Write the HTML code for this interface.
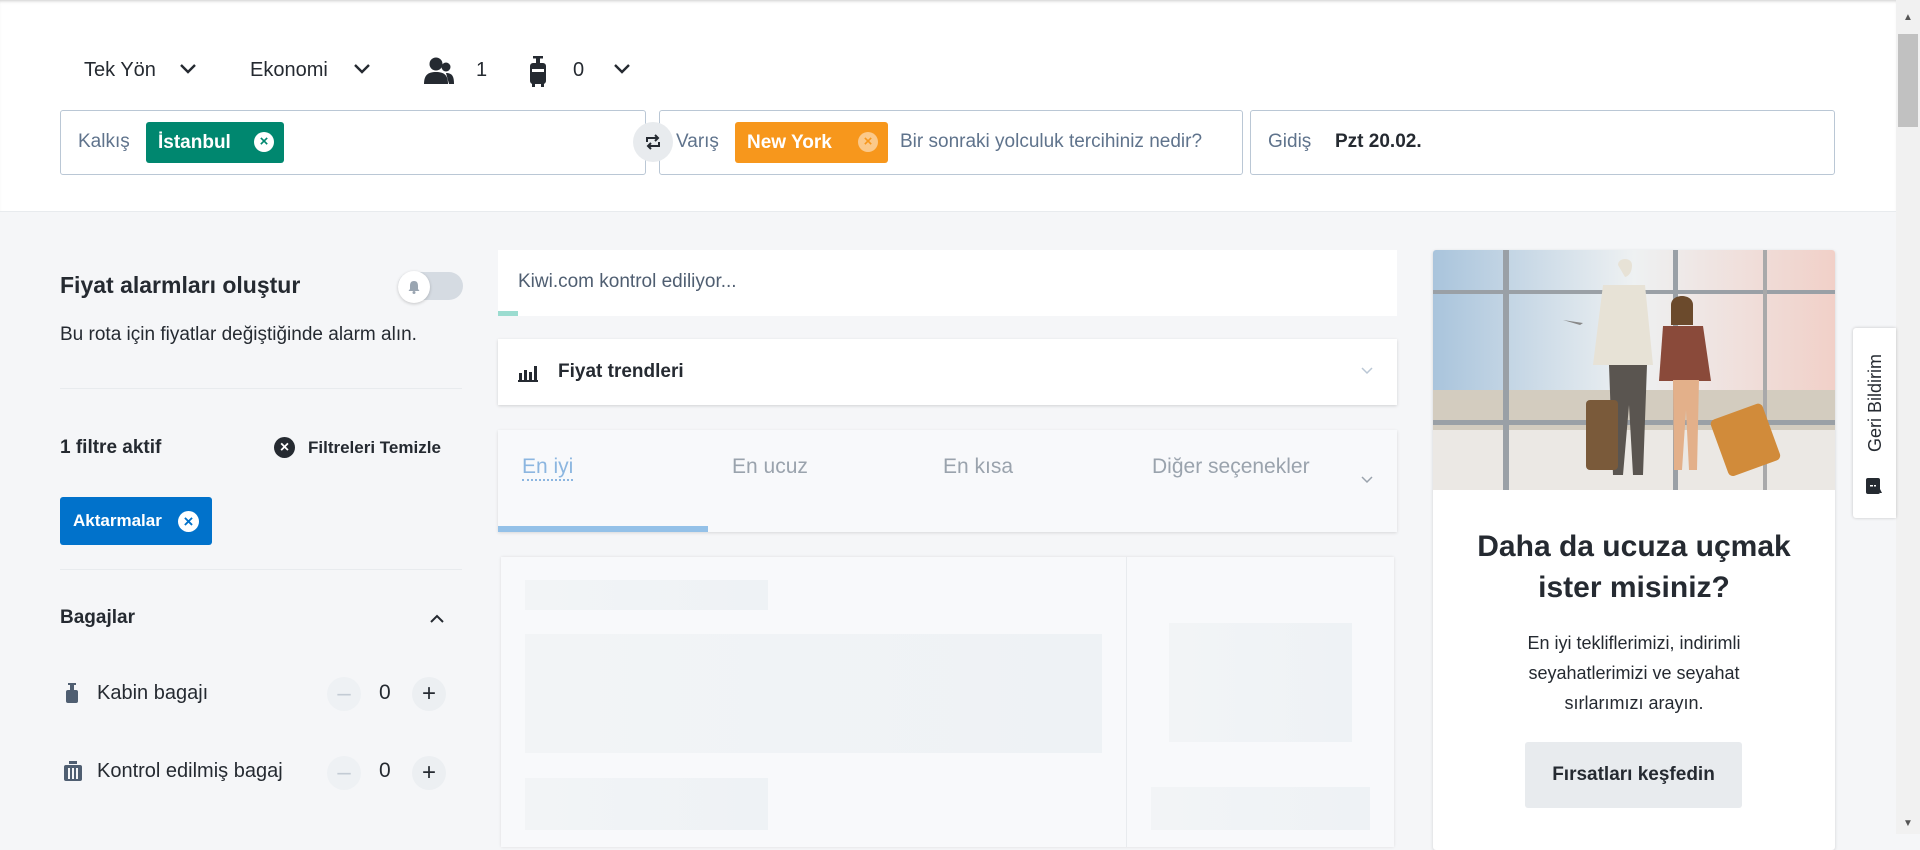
<!DOCTYPE html>
<html><head><meta charset="utf-8"><style>
*{box-sizing:border-box;margin:0;padding:0}
body{width:1920px;height:834px;overflow:hidden;background:#f5f6f8;font-family:"Liberation Sans",sans-serif;color:#252a31;position:relative}
.a{position:absolute}
.hdr{left:0;top:0;width:1896px;height:212px;background:#fff;border-bottom:1px solid #e8ebee;box-shadow:inset 0 3px 3px -2px #ccc}
.t{font-size:20px;line-height:24px}
.box{border:1px solid #bac7d5;border-radius:3px;background:#fff;height:65px;top:110px}
.lbl{font-size:19px;color:#5f738c}
.chip{height:41px;top:122px;border-radius:3px;color:#fff;font-weight:bold;font-size:19px;line-height:41px;padding-left:12px}
.cx{position:absolute;width:20px;height:20px;border-radius:50%;top:10px;font-size:15px;line-height:20px;text-align:center;font-weight:bold}
.card{background:#fff;box-shadow:0 1px 3px rgba(0,0,0,.15)}
.sk{background:linear-gradient(90deg,#f2f4f6,#eef2f5);}
.circ{width:34px;height:34px;border-radius:50%;background:#eceff2;text-align:center;line-height:34px;font-size:24px;color:#252a31}
.hr{height:1px;background:#e8ebee;left:60px;width:402px}
</style></head><body>
<div class="a hdr"></div>
<div class="a t" style="left:84px;top:58px">Tek Yön</div>
<svg class="a" style="left:178px;top:62px" width="20" height="14"><path d="M3 3l7 7 7-7" stroke="#252a31" stroke-width="2.4" fill="none"/></svg>
<div class="a t" style="left:250px;top:58px">Ekonomi</div>
<svg class="a" style="left:352px;top:62px" width="20" height="14"><path d="M3 3l7 7 7-7" stroke="#252a31" stroke-width="2.4" fill="none"/></svg>
<svg class="a" style="left:424px;top:56px" width="32" height="30"><circle cx="12" cy="8" r="6.5" fill="#252a31"/><path d="M0 28c0-9 4-12 12-12s12 3 12 12z" fill="#252a31"/><circle cx="22" cy="11" r="4.5" fill="#252a31"/><path d="M22 17c6 0 8 3 8 11h-5z" fill="#252a31"/></svg>
<div class="a t" style="left:476px;top:58px">1</div>
<svg class="a" style="left:528px;top:54px" width="20" height="34"><rect x="5" y="2" width="10" height="2.5" fill="#252a31"/><rect x="8" y="3" width="4" height="7" fill="#252a31"/><rect x="2" y="9" width="16" height="21" rx="3" fill="#252a31"/><rect x="4" y="15" width="12" height="3" fill="#fff"/><rect x="4" y="29" width="3" height="4" fill="#252a31"/><rect x="13" y="29" width="3" height="4" fill="#252a31"/></svg>
<div class="a t" style="left:573px;top:58px">0</div>
<svg class="a" style="left:612px;top:62px" width="20" height="14"><path d="M3 3l7 7 7-7" stroke="#252a31" stroke-width="2.4" fill="none"/></svg>

<div class="a box" style="left:60px;width:586px"></div>
<div class="a lbl" style="left:78px;top:131px">Kalkış</div>
<div class="a chip" style="left:146px;width:138px;background:#00876f">İstanbul<span class="cx" style="right:10px;background:#fff;color:#00876f">×</span></div>
<div class="a box" style="left:659px;width:584px"></div>
<div class="a lbl" style="left:676px;top:131px">Varış</div>
<div class="a chip" style="left:735px;width:153px;background:#f7971c">New York<span class="cx" style="right:10px;background:#fbc98a;color:#f7971c">×</span></div>
<div class="a lbl" style="left:900px;top:131px;width:340px;white-space:nowrap;overflow:hidden">Bir sonraki yolculuk tercihiniz nedir?</div>
<div class="a" style="left:633px;top:122px;width:40px;height:40px;border-radius:50%;background:#e8ebee"></div>
<svg class="a" style="left:643px;top:132px" width="20" height="20"><path d="M4 10V6h11M12 3l3 3-3 3M16 10v4H5M8 17l-3-3 3-3" stroke="#252a31" stroke-width="2" fill="none"/></svg>
<div class="a box" style="left:1250px;width:585px"></div>
<div class="a lbl" style="left:1268px;top:131px">Gidiş</div>
<div class="a" style="left:1335px;top:131px;font-size:19px;font-weight:bold">Pzt 20.02.</div>

<div class="a" style="left:1896px;top:0;width:24px;height:834px;background:#f1f1f1"></div>
<div class="a" style="left:1898px;top:34px;width:20px;height:93px;background:#c1c1c1"></div>
<div class="a" style="left:1903px;top:12px;font-size:10px;color:#555">▲</div>
<div class="a" style="left:1903px;top:818px;font-size:10px;color:#555">▼</div>

<!-- left -->
<div class="a" style="left:60px;top:272px;font-size:23px;font-weight:bold">Fiyat alarmları oluştur</div>
<div class="a" style="left:398px;top:272px;width:65px;height:28px;border-radius:14px;background:#d5dbe2"></div>
<div class="a" style="left:398px;top:271px;width:32px;height:32px;border-radius:50%;background:#fff;box-shadow:0 1px 3px rgba(0,0,0,.2)"></div>
<svg class="a" style="left:408px;top:280px" width="12" height="14"><path d="M6 1c3 0 4 2 4 5v3l1.5 2h-11L2 9V6c0-3 1-5 4-5z" fill="#9aa5b1"/><circle cx="6" cy="12.5" r="1.5" fill="#9aa5b1"/></svg>
<div class="a" style="left:60px;top:324px;font-size:19px">Bu rota için fiyatlar değiştiğinde alarm alın.</div>
<div class="a hr" style="top:388px"></div>
<div class="a" style="left:60px;top:437px;font-size:19px;font-weight:bold">1 filtre aktif</div>
<div class="a" style="left:274px;top:437px;width:21px;height:21px;border-radius:50%;background:#252a31;color:#fff;text-align:center;line-height:21px;font-size:16px;font-weight:bold">×</div>
<div class="a" style="left:308px;top:438px;font-size:17px;font-weight:bold;color:#252a31">Filtreleri Temizle</div>
<div class="a" style="left:60px;top:497px;width:152px;height:48px;border-radius:3px;background:#0172cb;color:#fff;font-weight:bold;font-size:17px;line-height:48px;padding-left:13px">Aktarmalar<span class="a" style="left:118px;top:14px;width:21px;height:21px;border-radius:50%;background:#fff;color:#0172cb;text-align:center;line-height:21px;font-size:17px">×</span></div>
<div class="a hr" style="top:569px"></div>
<div class="a" style="left:60px;top:607px;font-size:19px;font-weight:bold">Bagajlar</div>
<svg class="a" style="left:429px;top:613px" width="16" height="12"><path d="M2 9l6-6 6 6" stroke="#252a31" stroke-width="2" fill="none"/></svg>
<svg class="a" style="left:64px;top:683px" width="16" height="22"><rect x="4" y="0" width="8" height="2" fill="#4f5e71"/><rect x="6" y="1" width="4" height="6" fill="#4f5e71"/><rect x="2" y="7" width="12" height="13" rx="2" fill="#4f5e71"/></svg>
<div class="a" style="left:97px;top:682px;font-size:20px">Kabin bagajı</div>
<div class="a circ" style="left:327px;top:677px;color:#c3cbd4;background:#eef1f4">–</div>
<div class="a" style="left:379px;top:681px;font-size:21px">0</div>
<div class="a circ" style="left:412px;top:677px">+</div>
<svg class="a" style="left:63px;top:761px" width="20" height="22"><rect x="6" y="0" width="8" height="3" fill="#4f5e71"/><rect x="1" y="4" width="18" height="16" rx="2" fill="#4f5e71"/><rect x="5" y="7" width="2" height="11" fill="#f5f6f8"/><rect x="9" y="7" width="2" height="11" fill="#f5f6f8"/><rect x="13" y="7" width="2" height="11" fill="#f5f6f8"/></svg>
<div class="a" style="left:97px;top:760px;font-size:20px">Kontrol edilmiş bagaj</div>
<div class="a circ" style="left:327px;top:756px;color:#c3cbd4;background:#eef1f4">–</div>
<div class="a" style="left:379px;top:759px;font-size:21px">0</div>
<div class="a circ" style="left:412px;top:756px">+</div>

<!-- middle -->
<div class="a" style="left:498px;top:250px;width:899px;height:66px;background:#fff"></div>
<div class="a" style="left:518px;top:271px;font-size:19px;color:#4f5e71">Kiwi.com kontrol ediliyor...</div>
<div class="a" style="left:498px;top:311px;width:20px;height:5px;background:#9bdcd0"></div>
<div class="a card" style="left:498px;top:339px;width:899px;height:66px"></div>
<svg class="a" style="left:518px;top:364px" width="20" height="18"><rect x="1" y="9" width="3" height="7" fill="#252a31"/><rect x="6" y="6" width="3" height="10" fill="#252a31"/><rect x="11" y="8" width="3" height="8" fill="#252a31"/><rect x="16" y="2" width="3" height="14" fill="#252a31"/><rect x="0" y="16" width="20" height="2" fill="#252a31"/></svg>
<div class="a" style="left:558px;top:361px;font-size:19px;font-weight:bold">Fiyat trendleri</div>
<svg class="a" style="left:1360px;top:366px" width="14" height="10"><path d="M2 2l5 5 5-5" stroke="#bac7d5" stroke-width="1.5" fill="none"/></svg>
<div class="a" style="left:498px;top:430px;width:899px;height:102px;background:#f8f9fb;box-shadow:0 1px 3px rgba(0,0,0,.12)"></div>
<div class="a" style="left:522px;top:454px;font-size:21px;color:#8cb6e0;border-bottom:2px dotted #8cb6e0;line-height:25px">En iyi</div>
<div class="a" style="left:732px;top:454px;font-size:21px;color:#9aa3ad;line-height:25px">En ucuz</div>
<div class="a" style="left:943px;top:454px;font-size:21px;color:#9aa3ad;line-height:25px">En kısa</div>
<div class="a" style="left:1152px;top:454px;font-size:21px;color:#9aa3ad;line-height:25px">Diğer seçenekler</div>
<svg class="a" style="left:1360px;top:475px" width="14" height="10"><path d="M2 2l5 5 5-5" stroke="#9aa3ad" stroke-width="1.5" fill="none"/></svg>
<div class="a" style="left:498px;top:526px;width:210px;height:6px;background:#94c1e8"></div>
<div class="a" style="left:501px;top:557px;width:893px;height:290px;background:#f8f9fb;box-shadow:0 0 3px rgba(0,0,0,.1)"></div>
<div class="a" style="left:1126px;top:557px;width:1px;height:290px;background:#e8ebee"></div>
<div class="a sk" style="left:525px;top:580px;width:243px;height:30px"></div>
<div class="a sk" style="left:525px;top:634px;width:577px;height:119px"></div>
<div class="a sk" style="left:525px;top:778px;width:243px;height:52px"></div>
<div class="a sk" style="left:1169px;top:623px;width:183px;height:119px"></div>
<div class="a sk" style="left:1151px;top:787px;width:219px;height:43px"></div>

<!-- right promo -->
<div class="a card" style="left:1433px;top:250px;width:402px;height:600px;border-radius:3px;overflow:hidden">
<svg width="402" height="240" style="display:block">
<defs><linearGradient id="sky" x1="0" y1="0" x2="1" y2="0"><stop offset="0" stop-color="#a9c4dc"/><stop offset=".5" stop-color="#eef1f2"/><stop offset="1" stop-color="#f1d0c8"/></linearGradient></defs>
<rect width="402" height="240" fill="url(#sky)"/>
<rect x="0" y="140" width="402" height="40" fill="#d3ccbf"/>
<rect x="0" y="180" width="402" height="60" fill="#ebe8e4"/>
<rect x="0" y="40" width="402" height="4" fill="#9aa0a6"/><rect x="0" y="170" width="402" height="5" fill="#9aa0a6"/>
<rect x="70" y="0" width="6" height="240" fill="#9aa0a6"/><rect x="240" y="0" width="5" height="240" fill="#9aa0a6"/>
<rect x="330" y="0" width="4" height="240" fill="#a9a9aa"/>
<path d="M185 15c0-8 14-8 14 0 0 10-6 12-7 12zM170 35h42l8 80h-60z" fill="#e7e2d6"/>
<path d="M176 115h38l-4 110h-10l-4-70-6 70h-10z" fill="#5a5550"/>
<path d="M238 55c0-12 22-12 22 0v20h-22z" fill="#6b4a2c"/><path d="M230 76h40l8 55h-52z" fill="#8a4a3a"/>
<path d="M240 130h26l-2 90h-8l-3-60-4 60h-8z" fill="#e3b08a"/>
<rect x="153" y="150" width="32" height="70" rx="4" fill="#7a5a3a"/>
<rect x="285" y="160" width="55" height="60" rx="5" transform="rotate(-20 312 190)" fill="#d18b3a"/>
<path d="M130 70l20 3 -3 2z" fill="#888"/>
</svg>
</div>
<div class="a" style="left:1433px;top:526px;width:402px;text-align:center;font-size:30px;font-weight:bold;line-height:41px;color:#252a31">Daha da ucuza uçmak<br>ister misiniz?</div>
<div class="a" style="left:1433px;top:628px;width:402px;text-align:center;font-size:18px;line-height:30px">En iyi tekliflerimizi, indirimli<br>seyahatlerimizi ve seyahat<br>sırlarımızı arayın.</div>
<div class="a" style="left:1525px;top:742px;width:217px;height:66px;border-radius:3px;background:#e8ebee;text-align:center;line-height:66px;font-size:19px;font-weight:bold">Fırsatları keşfedin</div>

<div class="a" style="left:1853px;top:328px;width:43px;height:190px;background:#fff;box-shadow:0 0 3px rgba(0,0,0,.2);border-radius:3px 0 0 3px"></div>
<div class="a" style="left:1790px;top:391px;width:170px;height:24px;transform:rotate(-90deg);font-size:18px;line-height:24px;color:#252a31;text-align:center">Geri Bildirim</div>
<svg class="a" style="left:1866px;top:478px" width="16" height="18"><rect x="0" y="0" width="14" height="16" rx="2" fill="#252a31"/><path d="M14 11l2 4h-2z" fill="#252a31"/><rect x="4" y="7" width="3" height="1.5" fill="#fff"/><rect x="8" y="7" width="2" height="1.5" fill="#fff"/></svg>
</body></html>
